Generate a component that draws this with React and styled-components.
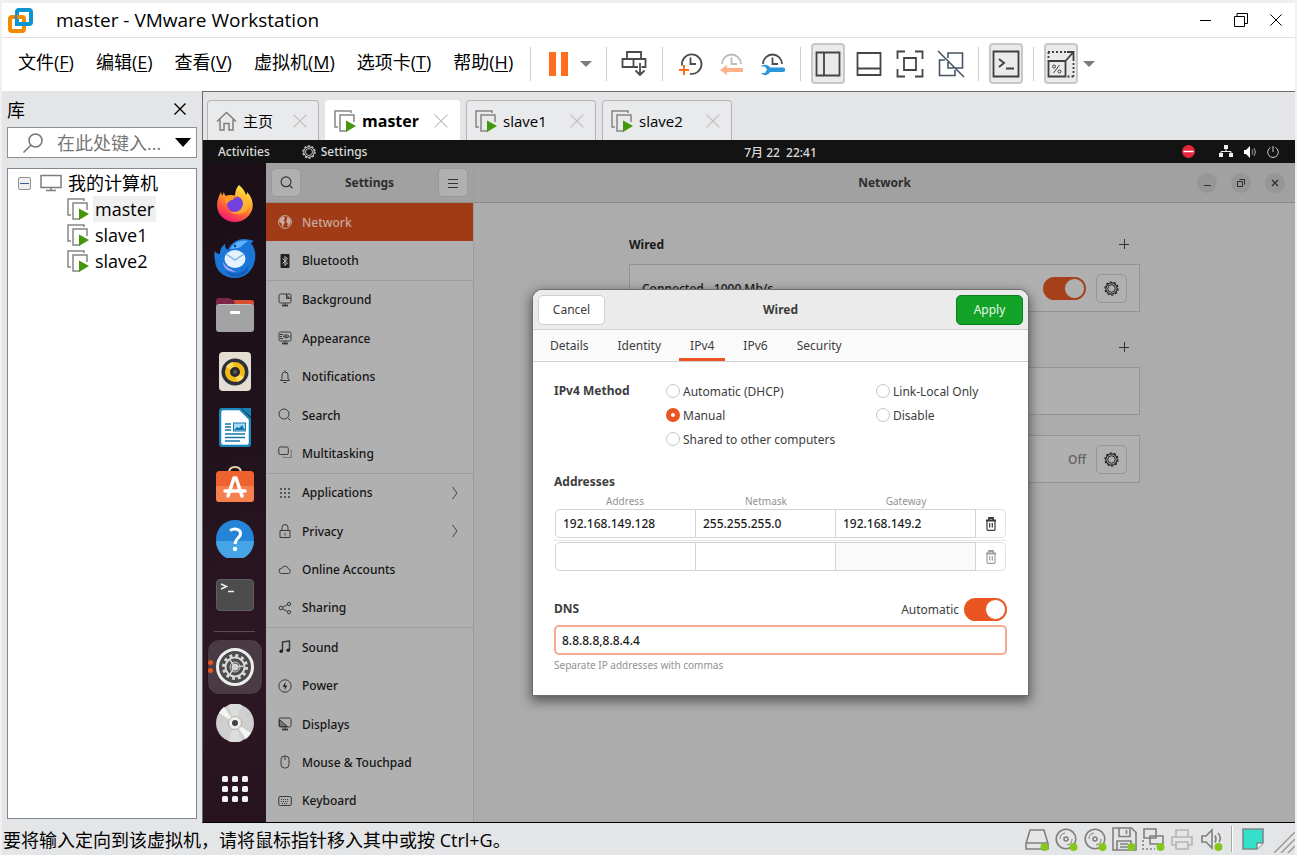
import React from "react";
import styled, { createGlobalStyle, css } from "styled-components";

const host = '"Open Sans", "Noto Sans CJK SC", sans-serif';
const guest = '"Noto Sans", "Noto Sans CJK SC", sans-serif';

const Global = createGlobalStyle`
  *, *::before, *::after { box-sizing: border-box; }
  body { margin: 0; font-family: ${host}; font-size: 18px; color: #000; overflow: hidden; }
  button, input { font: inherit; color: inherit; margin: 0; }
  button { padding: 0; border: 0; background: none; }
  svg { display: block; flex: none; }
  ul { list-style: none; margin: 0; padding: 0; }
  h1, h2, h3, p { margin: 0; font-weight: inherit; font-size: inherit; }
`;

/* ---------- host window ---------- */
const Window = styled.div`
  display: flex;
  flex-direction: column;
  height: 100vh;
  background: #e4e5e7;
  border: solid #f0f0f0;
  border-width: 3px 2px 0;
`;
const TitleBar = styled.header`
  display: flex;
  align-items: center;
  height: 35px;
  padding: 0 2px 0 6px;
  background: #fff;
  border-bottom: 1px solid #e0e0e0;
`;
const AppTitle = styled.h1`
  flex: 1;
  padding-left: 23px;
  font-size: 19px;
  line-height: 32px;
  white-space: nowrap;
`;
const CaptionButton = styled.button`
  display: grid;
  place-items: center;
  width: 35px;
  height: 32px;
`;
const MenuRow = styled.div`
  display: flex;
  align-items: center;
  height: 53px;
  background: #fff;
  padding: 0 0 2px 16px;
`;
const Menu = styled.nav`
  display: flex;
  gap: 22px;
  width: 509px;
  padding-bottom: 4px;
  white-space: nowrap;
`;
const MenuButton = styled.button`
  line-height: 26px;
  u { text-underline-offset: 2px; text-decoration-thickness: 1px; }
`;
const Tools = styled.div`
  display: flex;
  align-items: center;
  gap: 7px;
`;
const Rule = styled.span`
  width: 1px;
  height: 34px;
  margin: 0 ${(p) => (p.$roomy ? 4 : 3)}px;
  background: #cfcfcf;
`;
const ToolButton = styled.button`
  display: grid;
  place-items: center;
  width: 34px;
  height: 41px;
  border-radius: 4px;
  ${(p) => p.$on && css`background: #e9eaec; border: 2px solid #c9c9c9;`}
`;
const Caret = styled.button`
  display: grid;
  place-items: center;
  width: 12px;
  height: 41px;
  margin: 0 4px 0 -2px;
`;
const Main = styled.main`
  flex: 1;
  min-height: 0;
  display: flex;
`;
const Library = styled.aside`
  width: 200px;
  flex: none;
  display: flex;
  flex-direction: column;
  padding: 0 5px 4px;
`;
const LibraryHead = styled.div`
  display: flex;
  justify-content: space-between;
  align-items: center;
  height: 36px;
  padding: 0 11px 0 0;
`;
const SearchBox = styled.label`
  display: flex;
  align-items: center;
  height: 31px;
  margin-bottom: 10px;
  padding: 0 5px 0 15px;
  background: #fff;
  border: 1px solid #8f9091;
  input {
    flex: 1;
    min-width: 0;
    margin: 0 14px;
    padding: 0;
    border: 0;
    outline: 0;
    background: none;
  }
  input::placeholder { color: #767676; opacity: 1; }
`;
const Tree = styled.ul`
  flex: 1;
  background: #fff;
  border: 1px solid #828790;
  padding: 1px 0 0 10px;
`;
const TreeRow = styled.div`
  display: flex;
  align-items: center;
  height: 26px;
  padding-left: ${(p) => (p.$child ? 49 : 0)}px;
`;
const TreeToggle = styled.button`
  display: grid;
  place-items: center;
  width: 13px;
  height: 13px;
  margin-right: 9px;
  border: 1px solid #919191;
  border-radius: 2px;
  background: #eee;
  &::before { content: ""; width: 9px; height: 1px; background: #3c5a9c; }
`;
const TreeLabel = styled.span`
  line-height: 26px;
  margin-left: 4px;
  padding: 0 2px;
  background: ${(p) => (p.$on ? "#f0f0f0" : "none")};
`;
const Work = styled.section`
  flex: 1;
  min-width: 0;
  display: flex;
  flex-direction: column;
  border-left: 1px solid #6a6a6a;
  border-top: 1px solid #6a6a6a;
  border-bottom: 1px solid #000;
`;
const TabStrip = styled.div`
  display: flex;
  align-items: flex-end;
  gap: 6px;
  height: 48px;
  padding-left: 4px;
  font-size: 15px;
`;
const HostTab = styled.div`
  display: flex;
  align-items: center;
  height: 40px;
  padding: 0 11px 0 8px;
  width: ${(p) => p.$w}px;
  background: ${(p) => (p.$on ? "#fff" : "#e9eaec")};
  border: 1px solid ${(p) => (p.$on ? "#fff" : "#b4b4b4")};
  border-bottom: 0;
  border-radius: 4px 4px 0 0;
  font-size: ${(p) => (p.$on ? 16 : 15)}px;
  font-weight: ${(p) => (p.$on ? 700 : 400)};
`;
const TabName = styled.button`
  display: flex;
  align-items: center;
  gap: 6px;
  flex: 1;
  font-weight: inherit;
`;
const StatusBar = styled.footer`
  display: flex;
  align-items: center;
  height: 32px;
  padding-left: 1px;
`;
const StatusText = styled.span`
  flex: 1;
  white-space: nowrap;
`;
const StatusIcons = styled.div`
  display: flex;
  align-items: center;
  gap: 4px;
`;
const StatusItem = styled.button`
  display: grid;
  place-items: center;
  width: 25px;
  height: 28px;
`;
const StatusRule = styled.span`
  width: 2px;
  height: 26px;
  margin: 0 3px;
  background: #a8a8a8;
  border-right: 1px solid #fff;
`;

/* ---------- guest desktop ---------- */
const Guest = styled.div`
  flex: 1;
  min-height: 0;
  display: flex;
  flex-direction: column;
  font-family: ${guest};
  font-size: 12px;
  color: #1a1a1a;
`;
const TopBar = styled.div`
  display: grid;
  grid-template-columns: 63px 1fr auto 1fr;
  align-items: center;
  height: 23px;
  background: #131313;
  color: #dcdcdc;
  font-weight: 500;
`;
const TopLeft = styled.div`
  grid-column: 1 / 3;
  display: flex;
  align-items: center;
  gap: 32px;
  padding-left: 15px;
`;
const TopApp = styled.button`
  display: flex;
  align-items: center;
  gap: 5px;
`;
const TopRight = styled.div`
  display: flex;
  align-items: center;
  justify-content: flex-end;
  gap: 10px;
  padding-right: 16px;
  svg:first-child { margin-right: 14px; }
`;
const Desktop = styled.div`
  flex: 1;
  min-height: 0;
  display: flex;
`;
const Dock = styled.nav`
  width: 63px;
  flex: none;
  display: flex;
  flex-direction: column;
  align-items: center;
  padding: 12px 0 5px;
  background: linear-gradient(170deg, #1b0f17, #21121c 45%, #2e1724 75%, #26131e);
`;
const DockItem = styled.button`
  display: grid;
  place-items: center;
  position: relative;
  width: 56px;
  height: 56px;
  ${(p) => p.$on && css`
    background: #4a3a43;
    border: 1px solid #26131e;
    border-radius: 12px;
  `}
  ${(p) => p.$last && css`margin-top: auto;`}
`;
const Dots = styled.span`
  position: absolute;
  left: 0;
  top: 20px;
  display: grid;
  gap: 3px;
  &::before, &::after {
    content: "";
    width: 5px;
    height: 5px;
    border-radius: 50%;
    background: #e95420;
  }
`;
const DockRule = styled.span`
  width: 41px;
  height: 1px;
  margin: 8px 0 7px;
  background: #5a4b54;
`;
const AppWindow = styled.div`
  flex: 1;
  min-width: 0;
  position: relative;
  display: flex;
  background: #acacac;
`;
const Sidebar = styled.aside`
  width: 208px;
  flex: none;
  display: flex;
  flex-direction: column;
  background: #b0b0b0;
  border-right: 1px solid #9c9c9c;
`;
const SideHead = styled.div`
  display: flex;
  align-items: center;
  justify-content: space-between;
  height: 40px;
  padding: 0 5px;
  background: #a1a1a1;
  border-bottom: 1px solid #8e8e8e;
  font-weight: 700;
  color: #2e2e2e;
`;
const HeadButton = styled.button`
  display: grid;
  place-items: center;
  width: 30px;
  height: 29px;
  border: 1px solid #999;
  border-radius: 5px;
  background: #b0b0b0;
`;
const SideList = styled.ul`
  flex: 1;
  display: flex;
  flex-direction: column;
  padding-bottom: 2px;
`;
const SideItem = styled.li`
  flex: 1;
  display: flex;
  background: ${(p) => (p.$on ? "#a03a17" : "none")};
  color: ${(p) => (p.$on ? "#c9aa9f" : "#151515")};
  ${(p) => p.$end && css`border-bottom: 1px solid #9f9f9f;`}
`;
const SideButton = styled.button`
  flex: 1;
  display: flex;
  align-items: center;
  gap: 10px;
  padding: 0 14px 0 12px;
  font-weight: 500;
  text-align: left;
  span { flex: 1; }
`;
const Panel = styled.section`
  flex: 1;
  min-width: 0;
  display: flex;
  flex-direction: column;
`;
const PanelHead = styled.div`
  display: grid;
  grid-template-columns: 1fr auto 1fr;
  align-items: center;
  height: 40px;
  padding: 0 10px;
  background: #a1a1a1;
  border-bottom: 1px solid #8a8a8a;
  color: #2e2e2e;
  h2 { grid-column: 2; font-weight: 700; }
`;
const WinButtons = styled.div`
  display: flex;
  justify-content: flex-end;
  gap: 14px;
`;
const WinButton = styled.button`
  display: grid;
  place-items: center;
  width: 20px;
  height: 20px;
  border-radius: 50%;
  background: #969696;
`;
const PanelBody = styled.div`
  width: 511px;
  max-width: 100%;
  margin: 0 auto;
  padding-top: 21px;
`;
const GroupHead = styled.div`
  display: flex;
  justify-content: space-between;
  align-items: center;
  height: 40px;
  padding-right: 11px;
  font-weight: 700;
`;
const AddButton = styled.button`
  display: grid;
  place-items: center;
  width: 10px;
  height: 20px;
  margin-left: auto;
`;
const Card = styled.div`
  display: flex;
  align-items: center;
  justify-content: flex-end;
  gap: 10px;
  height: 48px;
  padding: 0 12px;
  margin-bottom: ${(p) => p.$gap}px;
  background: #b0b0b0;
  border: 1px solid #949494;
`;
const CardText = styled.span`
  flex: 1;
  font-weight: 500;
`;
const Muted = styled.span`
  color: #606060;
  font-weight: 500;
`;
const GearButton = styled.button`
  display: grid;
  place-items: center;
  width: 31px;
  height: 29px;
  border: 1px solid #959595;
  border-radius: 5px;
`;
const Switch = styled.input`
  appearance: none;
  flex: none;
  display: flex;
  justify-content: flex-end;
  align-items: center;
  width: 43px;
  height: 23px;
  padding: 1px;
  border-radius: 12px;
  background: ${(p) => (p.$dim ? "#a5401b" : "#e95420")};
  &::before {
    content: "";
    width: 21px;
    height: 21px;
    border-radius: 50%;
    border: 1px solid ${(p) => (p.$dim ? "#a5401b" : "#e95420")};
    background: ${(p) => (p.$dim ? "#b0b0b0" : "#fff")};
  }
`;

/* ---------- connection dialog ---------- */
const Overlay = styled.div`
  position: absolute;
  inset: 0;
  display: grid;
  place-items: center;
`;
const Dialog = styled.form`
  width: 495px;
  height: 405px;
  background: #fff;
  border-radius: 9px 9px 0 0;
  overflow: hidden;
  box-shadow: 0 0 0 1px #6e6e6e, 0 4px 12px 2px rgba(0, 0, 0, 0.5);
  color: #3d3d3d;
`;
const DialogHead = styled.div`
  display: flex;
  align-items: center;
  justify-content: space-between;
  height: 40px;
  padding: 0 5px;
  background: #ebebeb;
  border-bottom: 1px solid #d2d2d2;
  h2 { font-weight: 700; }
`;
const DialogButton = styled.button`
  width: 67px;
  height: 30px;
  border: 1px solid ${(p) => (p.$go ? "#0c7d1f" : "#d0d0d0")};
  border-radius: 5px;
  background: ${(p) => (p.$go ? "#13a329" : "#fff")};
  color: ${(p) => (p.$go ? "#e8f6ea" : "#3d3d3d")};
`;
const Tabs = styled.div`
  display: flex;
  gap: 7px;
  height: 32px;
  padding-left: 6px;
  background: #fafafa;
  border-bottom: 1px solid #d2d2d2;
`;
const Tab = styled.button`
  padding: 3px 11px 0;
  border-bottom: 3px solid ${(p) => (p.$on ? "#e95420" : "transparent")};
`;
const DialogBody = styled.div`
  padding: 17px 21px 0 21px;
`;
const Methods = styled.div`
  display: grid;
  grid-template-columns: 112px 210px 1fr;
  grid-auto-rows: 24px;
  align-items: center;
  margin-bottom: 19px;
`;
const FieldTitle = styled.h3`
  line-height: 24px;
  font-weight: 700;
`;
const Choice = styled.label`
  grid-column: ${(p) => p.$col};
  display: flex;
  align-items: center;
  gap: 3px;
  white-space: nowrap;
`;
const Radio = styled.input.attrs({ type: "radio" })`
  appearance: none;
  width: 14px;
  height: 14px;
  border: 1px solid #c6c6c6;
  border-radius: 50%;
  background: #fff;
  &:checked { border: 5px solid #e95420; }
`;
const AddressTable = styled.table`
  width: 100%;
  border-collapse: separate;
  border-spacing: 0;
  table-layout: fixed;
  margin-bottom: 26px;
  th {
    height: 15px;
    padding: 0;
    font-size: 10px;
    line-height: 15px;
    font-weight: 400;
    color: #929292;
  }
  td { padding: 0; height: 29px; }
  td:first-child { padding-left: 1px; }
  td:last-child { padding-right: 1px; }
  tr:first-child td { padding-bottom: 2px; border-bottom: 1px solid #e6e6e6; }
  tr:last-child td { padding-top: 1px; }
  th:first-child { width: 142px; }
  th:last-child { width: 31px; }
`;
const Cell = styled.input`
  display: block;
  width: 100%;
  height: 29px;
  padding: 0 7px;
  border: 1px solid #d4d4d4;
  border-left-width: ${(p) => (p.$first ? 1 : 0)}px;
  border-radius: ${(p) => (p.$first ? "5px 0 0 5px" : "0")};
  background: ${(p) => (p.$off ? "#fafafa" : "#fff")};
  font-weight: 500;
  color: #1d1d1d;
`;
const Trash = styled.button`
  display: grid;
  place-items: center;
  width: 100%;
  height: 29px;
  border: 1px solid #e2e2e2;
  border-left: 0;
  border-radius: 0 5px 5px 0;
  color: ${(p) => (p.disabled ? "#a0a0a0" : "#3a3a3a")};
`;
const DnsHead = styled.div`
  display: flex;
  align-items: center;
  justify-content: space-between;
  height: 24px;
  margin-bottom: 4px;
  label { display: flex; align-items: center; gap: 5px; }
`;
const DnsInput = styled.input`
  display: block;
  width: 100%;
  height: 30px;
  padding: 0 6px;
  border: 2px solid #f4ab91;
  border-radius: 5px;
  outline: 0;
  font-weight: 500;
  color: #1d1d1d;
`;
const Hint = styled.p`
  margin-top: 2px;
  font-size: 10px;
  line-height: 16px;
  color: #929292;
`;

/* ---------- drawings ---------- */
const Svg = ({ w, h = w, vb, sw = 1, c = "currentColor", children }) => (
  <svg width={w} height={h} viewBox={vb || `0 0 ${w} ${h}`} fill="none" stroke={c} strokeWidth={sw} aria-hidden="true">
    {children}
  </svg>
);

const Logo = () => (
  <Svg w={25} sw={4}>
    <rect x="9" y="2" width="14" height="14" rx="2" stroke="#0a94d2" />
    <rect x="2" y="9" width="14" height="14" rx="2" stroke="#f38b00" />
    <path d="M9 7v9h9" stroke="#0a94d2" />
    <path d="M9 9h5.500" stroke="#f38b00" />
  </Svg>
);
const VmIcon = () => (
  <Svg w={22} c="#858585" sw={1.5}>
    <path d="M4 17H1V1h16v2" />
    <path d="M13 21H6V5h14v7" />
    <path d="M12 10.500l10 5.500-10 6z" fill="#45960c" stroke="none" />
  </Svg>
);
const Cross = ({ s = 11, c = "#000", sw = 1 }) => (
  <Svg w={s} vb="0 0 12 12" c={c} sw={sw}><path d="M.5.5l11 11M11.500.5l-11 11" /></Svg>
);
const HomeIcon = () => (
  <Svg w={21} h={20} c="#7d7d7d" sw={1.5}>
    <path d="M1 10.500L10.500 1.500 20 10.500M4 8.500v10.500h4v-6.500h5V19h4V8.500" />
  </Svg>
);
const CaretIcon = () => (
  <Svg w={12} h={6}><path d="M0 0h12L6 6z" fill="#7c7c7c" stroke="none" /></Svg>
);

const ClockFace = ({ c = "#4d4d4d", full }) => (
  <g stroke={c} strokeWidth="1.800">
    {full ? <path d="M4 14.500a9.800 9.800 0 1 1 8 8.300" /> : <path d="M3 13a9.500 9.500 0 1 1 19 0" />}
    <path d="M12.500 6.500v6.500h5.500" />
  </g>
);
const toolIcons = {
  pause: <Svg w={19} h={24}><path d="M0 0h7v24H0zM12 0h7v24h-7z" fill="#ff6c1c" stroke="none" /></Svg>,
  send: (
    <Svg w={26} c="#4a4a4a" sw={1.8}>
      <path d="M6 1h14v7H6zM12.500 8v8M17 16H1.500V8h23v8h-4M19 12v12M14.500 19.500L19 24l4.500-4.500" />
    </Svg>
  ),
  snap: <Svg w={26}><ClockFace full /><path d="M1 19h10M6 14v10" stroke="#ff6c1c" strokeWidth="2" /></Svg>,
  revert: (
    <Svg w={26}><ClockFace c="#bdbdbd" /><path d="M1 19l7-5v3h16v4H8v3z" fill="#ffb28a" stroke="none" /></Svg>
  ),
  manage: (
    <Svg w={26}>
      <ClockFace />
      <path d="M1 15.500h4l2 3-2 3.500H1.500C3 25 8 25 10 21h13a2 2 0 0 0 0-4.500H10C8 13 3 13 1 15.500z" fill="#2a97d8" stroke="none" />
    </Svg>
  ),
  library: <Svg w={26} c="#454545" sw={1.8}><path d="M1.500 1.500h23v23h-23zM9 1.500v23" /></Svg>,
  thumbs: <Svg w={26} c="#454545" sw={1.8}><path d="M1.500 2h23v22h-23zM1.500 17.500h23" /></Svg>,
  full: (
    <Svg w={28} c="#454545" sw={1.8}>
      <path d="M1.500 9V1.500H9M19 1.500h7.500V9M26.500 19v7.500H19M9 26.500H1.500V19M8 8h12v12H8z" />
    </Svg>
  ),
  unity: (
    <Svg w={28} c="#465564" sw={1.6}>
      <path d="M8 10H2.500v15.500H18V20M11 8V3h14.500v15H18M11 12v6h6M1 1l26 26" />
    </Svg>
  ),
  console: <Svg w={28} c="#3f3f3f" sw={1.8}><path d="M1.500 1.500h25v25h-25zM7 9l5 4-5 4M14 18.500h8" /></Svg>,
  stretch: (
    <Svg w={28} c="#3f3f3f" sw={1.8}>
      <path d="M1.500 11h17v15.500h-17zM18.500 11L26 2.500M20 2h6.500v7" />
      <path d="M1 2h19M1.500 2v9M26.500 9v17.500M26.500 26.500h-8" strokeDasharray="2 2" />
      <path d="M6.500 23l6-8" strokeWidth="1" />
      <circle cx="7" cy="16.500" r="1.500" strokeWidth="1" /><circle cx="12.500" cy="21.500" r="1.500" strokeWidth="1" />
    </Svg>
  ),
};

const Live = () => <circle cx="19.500" cy="21" r="4" fill="#85c81c" stroke="none" />;
const Disc = () => (
  <>
    <circle cx="12" cy="13" r="9.800" /><circle cx="12" cy="13" r="2" />
    <path d="M6 13a6 6 0 0 1 5-6M18 13a6 6 0 0 1-5 6" strokeWidth="1" />
  </>
);
const statusIcons = {
  "Hard disk": <><path d="M1 17.500L5 4h14l4 13.500v5.500H1zM1 17h22" /><Live /></>,
  "CD 1": <><Disc /><Live /></>,
  "CD 2": <><Disc /><Live /></>,
  Floppy: <><path d="M1 2h18.500L24 6.500V24H1zM7 2v8.500h11V2M5 24v-9h14v9M8 18h8M8 21h8M14.500 4v4" /><Live /></>,
  Network: (
    <>
      <path d="M3 3h12v9H3zM9 10h13v8H9z" fill="#e4e5e7" /><path d="M2 14v9h12" strokeDasharray="2 2" /><Live />
    </>
  ),
  Printer: (
    <g stroke="#b5b5b5"><path d="M6 11V4h12v7M6 19H2v-8h20v8h-4M6 16h12v7H6z" /></g>
  ),
  Sound: <><path d="M3 10h4l6-6v18l-6-6H3zM16 9.500q2 3.500 0 7M19 7q4 5 1 9" /><Live /></>,
};

const Gear = ({ s = 15, c = "currentColor" }) => (
  <Svg w={s} vb="0 0 16 16" c={c}>
    <circle cx="8" cy="8" r="7" strokeWidth="1.200" strokeDasharray="2.400 2" />
    <circle cx="8" cy="8" r="6" strokeWidth="1.100" /><circle cx="8" cy="8" r="4" strokeWidth="1" />
  </Svg>
);
const Lens = ({ s = 14, sw = 1.2, c }) => (
  <Svg w={s} vb="0 0 14 14" sw={sw} c={c}><circle cx="6.500" cy="6.200" r="5.300" /><path d="M10.200 10l3.200 3.200" /></Svg>
);

const screen = <path d="M2.500 1h9q1.500 0 1.500 1.500v6q0 1.500-1.500 1.500h-9Q1 10 1 8.500v-6Q1 1 2.500 1zM7 10v2.500" />;
const foot = <path d="M4 12.500h6" strokeWidth="1.800" />;
const sideIcons = {
  Network: (
    <>
      <circle cx="7" cy="7" r="6.400" />
      <path d="M2 3.500L5.500 1 7 3.500 5.500 5l1.500 2.500-1.500 2L5.200 13 4 11 3.500 8.500 1 6.500zM9 2l3 1.500 1 3.500-2 3.500-1.500 1V8L7.800 6.500 9 5z" fill="currentColor" stroke="none" />
    </>
  ),
  Bluetooth: (
    <>
      <rect x="2.500" y="0" width="9" height="14" rx="1" fill="#222" stroke="none" />
      <path d="M4.500 4.500l5 4.500L7 11.500v-9L9.500 5l-5 4.500" stroke="#c4c4c4" />
    </>
  ),
  Background: <>{screen}<path d="M8.500 1v4.500H13" /><path d="M9 5V1.500L12.500 5z" fill="#666" stroke="none" />{foot}</>,
  Appearance: (
    <>{screen}<path d="M2 3.500h3M2 5.500h2M2 7.500h3M5 5.500q3-3.500 6.500 0-3 3-6.500 0" /><circle cx="8" cy="5.500" r=".8" />{foot}</>
  ),
  Notifications: <path d="M2.500 10.500h9l-1.500-2V5a3 3 0 0 0-6 0v3.500zM5.500 12.500h3M7 .5v1.500" />,
  Search: <><circle cx="6" cy="6" r="5" /><path d="M9.700 9.700l3 3" /></>,
  Multitasking: <><rect x=".8" y="1" width="9.500" height="7.500" rx="1.500" /><path d="M12 4.500h1.300v7H5v-1" stroke="#777" /></>,
  Applications: (
    <path d="M2 3h2M6 3h2M10 3h2M2 7h2M6 7h2M10 7h2M2 11h2M6 11h2M10 11h2" strokeWidth="1.600" />
  ),
  Privacy: <path d="M2 6.500h10v7H2zM4 6.500V3.500a3 3 0 0 1 6 0v3M7 9v2.500" />,
  "Online Accounts": <path d="M3.500 10.500a2.600 2.600 0 0 1 .2-5.200 3.600 3.600 0 0 1 6.800.6 2.400 2.400 0 0 1 .2 4.600z" />,
  Sharing: (
    <><circle cx="3" cy="7" r="1.800" /><circle cx="11" cy="3" r="1.600" /><circle cx="11" cy="11.200" r="1.600" /><path d="M4.700 6.200L9.500 3.700M4.700 7.900l4.800 2.500" /></>
  ),
  Sound: (
    <><path d="M4.500 11V2l7-1v9" strokeWidth="1.500" /><circle cx="3.200" cy="11.300" r="1.800" fill="#222" stroke="none" /><circle cx="10.200" cy="10.300" r="1.800" fill="#222" stroke="none" /></>
  ),
  Power: <><circle cx="7" cy="7" r="6.200" /><path d="M7.500 2.800L4.700 7.700h2.100L6.500 11.200l2.900-4.800H7.200z" fill="#222" stroke="none" /></>,
  Displays: <>{screen}<path d="M1.500 2.500L9.500 9.500h-8z" fill="#777" />{foot}</>,
  "Mouse & Touchpad": <><rect x="3" y="1" width="8" height="12" rx="3.500" /><path d="M7 1v4" /></>,
  Keyboard: <><rect x=".8" y="2.500" width="12.500" height="9" rx="1.500" /><path d="M3 5.500h8M3 7.500h8M4 9.500h6" strokeDasharray="1 1" /></>,
};

const TrashIcon = () => (
  <Svg w={12} h={14} sw={1.2}>
    <path d="M1 3.500h10M4 3V1h4v2" strokeWidth="1.800" />
    <path d="M2 4v8.500q0 .8.800.8h6.400q.8 0 .8-.8V4M4.700 6v4.500M7.300 6v4.500" />
  </Svg>
);

const Firefox = () => (
  <svg width="38" height="40" viewBox="0 0 38 40" aria-hidden="true">
    <defs>
      <linearGradient id="ff" x1=".8" y1="0" x2=".3" y2="1">
        <stop offset="0" stopColor="#fff04a" /><stop offset=".4" stopColor="#ffab2e" /><stop offset=".7" stopColor="#ff5a3a" /><stop offset="1" stopColor="#f0147a" />
      </linearGradient>
    </defs>
    <path d="M23 2c4 3 6 7 7 10 1-1 1-2 1-3 5 5 7 12 5 18C33 35 26 39 19 39 9 39 1 32 1 22c0-5 2-9 4-13l1 4 2-4c0 2 1 3 2 4 4-1 7 0 9 1 0-5 1-9 4-12z" fill="url(#ff)" />
    <circle cx="19" cy="21" r="8" fill="#7540e0" />
    <path d="M10 13c5-2 10-1 12 1-3 0-5 1-5 3-3 0-5 2-6 4-2-2-3-5-1-8z" fill="#ff9a1f" />
    <path d="M27 17c1 7-3 12-9 12-4 0-7-2-8-5 3 8 18 11 22 1 1-4 0-8-2-11z" fill="#ffb931" opacity=".7" />
  </svg>
);
const Thunderbird = () => (
  <svg width="42" height="40" viewBox="0 0 42 40" aria-hidden="true">
    <path d="M1 12c1 2 3 3 5 3 0-5 2-8 5-10 0 3 1 5 3 6C17 4 23 0 30 0c4 0 7 1 10 2l-3 2c4 5 5 11 4 17C39 32 31 39 21 39 9 39 1 31 1 21c-1-3-1-6 0-9z" fill="#1b76d8" />
    <path d="M16 10c4-7 11-10 19-8-5 1-6 6-11 7z" fill="#5db1fa" />
    <path d="M11 31c7 6 20 4 24-6 0 8-6 13-13 13-5 0-9-3-11-7z" fill="#0f55ae" opacity=".7" />
    <path d="M9 23c0 6 5 10 13 10-3-2-10-4-13-10z" fill="#a9a2fa" />
    <ellipse cx="21" cy="20" rx="10.500" ry="9" fill="#e6f2ff" />
    <path d="M12 15l9 6 9-6" fill="none" stroke="#7fb4ea" strokeWidth="1.500" />
    <circle cx="21" cy="7" r="1.200" fill="#083a7a" />
  </svg>
);
const Files = () => (
  <svg width="38" height="36" viewBox="0 0 38 36" aria-hidden="true">
    <path d="M0 4q0-3 3-3h10l4 2h18q3 0 3 3v10H0z" fill="#7b2846" /><path d="M18 3h17q3 0 3 3v8H20z" fill="#d8512e" />
    <rect y="7" width="38" height="28" rx="3" fill="#a3a3a3" /><path d="M3 7.500h32" stroke="#c4c4c4" /><rect x="14" y="14" width="10" height="3" rx="1" fill="#fff" />
  </svg>
);
const Rhythmbox = () => (
  <svg width="32" height="39" viewBox="0 0 32 39" aria-hidden="true">
    <rect width="32" height="39" rx="4" fill="#e3ddd2" /><circle cx="16" cy="20" r="13.500" fill="#2c2f3a" /><circle cx="16" cy="20" r="10" fill="#f2ba14" />
    <path d="M16 20L7 15a10 10 0 0 1 7-5zM16 20l9 5a10 10 0 0 1-7 5z" fill="#ffd95a" /><circle cx="16" cy="20" r="5" fill="#2a2a2e" /><circle cx="16" cy="20" r="2" fill="#55555c" />
  </svg>
);
const Writer = () => (
  <svg width="32" height="39" viewBox="0 0 32 39" aria-hidden="true">
    <path d="M4 1h17l10 10v24q0 3-3 3H4q-3 0-3-3V4q0-3 3-3z" fill="#fff" stroke="#1985b8" strokeWidth="2.500" /><path d="M22 0h10v9z" fill="#1b7fb4" />
    <path d="M6 16h6M6 19h6M6 22h6M6 26h20M6 29.500h20M6 33h15" stroke="#1677ae" strokeWidth="1.500" />
    <rect x="14.500" y="15" width="12" height="8" fill="#a8dcf4" stroke="#1677ae" /><path d="M15 22l3-3 2 1 3-3 3 5z" fill="#1677ae" />
  </svg>
);
const Software = () => (
  <svg width="38" height="37" viewBox="0 0 38 37" aria-hidden="true">
    <path d="M13 8q0-6 6-6t6 6" fill="none" stroke="#e6cfa6" strokeWidth="2" /><rect y="6" width="38" height="31" rx="3.500" fill="#ee6230" /><path d="M0 21h38v12.500q0 3.500-3.500 3.500h-31Q0 37 0 33.500z" fill="#f57f4d" />
    <path d="M12 31l6-18h2l6 18M9 26h20" fill="none" stroke="#fff" strokeWidth="3.500" strokeLinecap="round" strokeLinejoin="round" />
  </svg>
);
const Help = () => (
  <svg width="38" height="38" viewBox="0 0 38 38" aria-hidden="true">
    <circle cx="19" cy="19" r="19" fill="#2384d8" /><path d="M0 21h38a19 19 0 0 1-38 0z" fill="#46a3e6" />
    <path d="M14 10.500c5-3 11-1 10.500 3.500-.4 4-5.500 4.500-5.500 10" fill="none" stroke="#fff" strokeWidth="3" /><circle cx="19" cy="29" r="2.200" fill="#fff" />
  </svg>
);
const Terminal = () => (
  <svg width="38" height="32" viewBox="0 0 38 32" aria-hidden="true">
    <rect x=".5" y=".5" width="37" height="31" rx="3.500" fill="#4c4c4c" stroke="#5e5e5e" /><path d="M5 5l5.500 2.500L5 10M12 12.500h6" fill="none" stroke="#eee" strokeWidth="1.500" />
  </svg>
);
const SettingsApp = () => (
  <svg width="38" height="38" viewBox="0 0 38 38" fill="none" aria-hidden="true">
    <circle cx="19" cy="19" r="17.500" fill="#4b4b4b" stroke="#ededed" strokeWidth="3" />
    <circle cx="19" cy="19" r="11.500" stroke="#d9d9d9" strokeWidth="3" strokeDasharray="3 3.020" />
    <circle cx="19" cy="19" r="9.500" stroke="#d9d9d9" strokeWidth="2" /><circle cx="19" cy="19" r="5" stroke="#d0d0d0" strokeWidth="1" /><circle cx="19" cy="19" r="3.500" fill="#d9d9d9" />
    <path d="M19 19l8-1M19 19l-5 7M19 19l-5-7" stroke="#d0d0d0" strokeWidth="1.500" />
  </svg>
);
const DiscApp = () => (
  <svg width="38" height="38" viewBox="0 0 38 38" aria-hidden="true">
    <circle cx="19" cy="19" r="19" fill="#cfcfcf" /><path d="M19 19L3 9a19 19 0 0 1 5-6zM19 19l16 10a19 19 0 0 1-5 6z" fill="#f4f4f4" /><path d="M19 19L12 1a19 19 0 0 1 14 0zM19 19l-7 18a19 19 0 0 0 14 0z" fill="#dcdcdc" />
    <circle cx="19" cy="19" r="6.500" fill="#efefef" stroke="#b8b09c" /><circle cx="19" cy="19" r="3" fill="#3f4248" />
  </svg>
);
const Grid9 = () => (
  <svg width="26" height="26" viewBox="0 0 26 26" fill="#f2f2f2" aria-hidden="true">
    {[0, 10, 20].flatMap((x) => [0, 10, 20].map((y) => <rect key={`${x}-${y}`} x={x} y={y} width="6" height="6" rx="1.500" />))}
  </svg>
);

/* ---------- content ---------- */
const menus = [["文件", "F"], ["编辑", "E"], ["查看", "V"], ["虚拟机", "M"], ["选项卡", "T"], ["帮助", "H"]];
const dockApps = [
  ["Firefox", Firefox], ["Thunderbird", Thunderbird], ["Files", Files], ["Rhythmbox", Rhythmbox],
  ["Writer", Writer], ["Software", Software], ["Help", Help], ["Terminal", Terminal],
];
const groupEnds = ["Bluetooth", "Multitasking", "Sharing"];
const withArrow = ["Applications", "Privacy"];
const Tool = ({ name, on }) => <ToolButton aria-label={name} $on={on}>{toolIcons[name]}</ToolButton>;

function GuestSidebar() {
  return (
    <Sidebar>
      <SideHead>
        <HeadButton aria-label="Search"><Lens s={13} c="#333" /></HeadButton>
        <h2>Settings</h2>
        <HeadButton aria-label="Menu"><Svg w={10} h={10} c="#333"><path d="M0 1.500h10M0 5.500h10M0 9.500h10" /></Svg></HeadButton>
      </SideHead>
      <SideList>
        {Object.keys(sideIcons).map((name) => (
          <SideItem key={name} $on={name === "Network"} $end={groupEnds.includes(name)}>
            <SideButton>
              <Svg w={14} c={name === "Network" ? "currentColor" : "#3a3a3a"}>{sideIcons[name]}</Svg>
              <span>{name}</span>
              {withArrow.includes(name) && <Svg w={8} h={14} c="#444"><path d="M1.500 1L6 7l-4.500 6" /></Svg>}
            </SideButton>
          </SideItem>
        ))}
      </SideList>
    </Sidebar>
  );
}

const Plus = () => <Svg w={10} h={10} c="#333"><path d="M0 5.500h10M5.500 0v10" /></Svg>;

function NetworkPanel() {
  return (
    <Panel>
      <PanelHead>
        <h2>Network</h2>
        <WinButtons>
          <WinButton aria-label="Minimize"><Svg w={8} h={8}><path d="M1 6.500h7" /></Svg></WinButton>
          <WinButton aria-label="Restore"><Svg w={8} h={8}><path d="M.5 2.500h5v5h-5zM2.500.5h5v5" /></Svg></WinButton>
          <WinButton aria-label="Close"><Svg w={8} h={8} sw={1.4}><path d="M1 1l6 6M7 1L1 7" /></Svg></WinButton>
        </WinButtons>
      </PanelHead>
      <PanelBody>
        <GroupHead><span>Wired</span><AddButton aria-label="Add wired connection"><Plus /></AddButton></GroupHead>
        <Card $gap={15}>
          <CardText>Connected - 1000 Mb/s</CardText>
          <Switch type="checkbox" defaultChecked $dim aria-label="Wired" />
          <GearButton aria-label="Wired options"><Gear /></GearButton>
        </Card>
        <GroupHead><AddButton aria-label="Add"><Plus /></AddButton></GroupHead>
        <Card $gap={20} />
        <Card $gap={0}>
          <Muted>Off</Muted>
          <GearButton aria-label="Options"><Gear /></GearButton>
        </Card>
      </PanelBody>
    </Panel>
  );
}

function ConnectionDialog() {
  return (
    <Overlay>
      <Dialog role="dialog" aria-label="Wired" onSubmit={(e) => e.preventDefault()}>
        <DialogHead>
          <DialogButton type="button">Cancel</DialogButton>
          <h2>Wired</h2>
          <DialogButton $go>Apply</DialogButton>
        </DialogHead>
        <Tabs role="tablist">
          {["Details", "Identity", "IPv4", "IPv6", "Security"].map((t) => (
            <Tab key={t} type="button" role="tab" aria-selected={t === "IPv4"} $on={t === "IPv4"}>{t}</Tab>
          ))}
        </Tabs>
        <DialogBody>
          <Methods>
            <FieldTitle>IPv4 Method</FieldTitle>
            <Choice $col={2}><Radio name="method" />Automatic (DHCP)</Choice>
            <Choice $col={3}><Radio name="method" />Link-Local Only</Choice>
            <Choice $col={2}><Radio name="method" defaultChecked />Manual</Choice>
            <Choice $col={3}><Radio name="method" />Disable</Choice>
            <Choice $col={2}><Radio name="method" />Shared to other computers</Choice>
          </Methods>
          <FieldTitle>Addresses</FieldTitle>
          <AddressTable>
            <thead>
              <tr><th>Address</th><th>Netmask</th><th>Gateway</th><th /></tr>
            </thead>
            <tbody>
              {[["192.168.149.128", "255.255.255.0", "192.168.149.2"], ["", "", ""]].map((row, r) => (
                <tr key={r}>
                  {row.map((v, i) => (
                    <td key={i}>
                      <Cell defaultValue={v} $first={i === 0} $off={r === 1 && i === 2} aria-label={["Address", "Netmask", "Gateway"][i]} />
                    </td>
                  ))}
                  <td><Trash type="button" disabled={r === 1} aria-label="Delete"><TrashIcon /></Trash></td>
                </tr>
              ))}
            </tbody>
          </AddressTable>
          <DnsHead>
            <FieldTitle>DNS</FieldTitle>
            <label>Automatic<Switch type="checkbox" defaultChecked /></label>
          </DnsHead>
          <DnsInput defaultValue="8.8.8.8,8.8.4.4" aria-label="DNS" />
          <Hint>Separate IP addresses with commas</Hint>
        </DialogBody>
      </Dialog>
    </Overlay>
  );
}

function GuestDesktop() {
  return (
    <Guest>
      <TopBar>
        <TopLeft>
          <TopApp>Activities</TopApp>
          <TopApp><Gear s={14} />Settings</TopApp>
        </TopLeft>
        <span>7月 22&nbsp; 22:41</span>
        <TopRight>
          <Svg w={13}><circle cx="6.500" cy="6.500" r="6.500" fill="#e5263c" stroke="none" /><path d="M1.500 6.500h10" stroke="#fff" strokeWidth="1.500" /></Svg>
          <Svg w={14} h={13} c="#eee"><path d="M5 0h4v4H5zM0 8h4v4H0zM10 8h4v4h-4z" fill="#eee" stroke="none" /><path d="M7 4v2.500M2 8.500v-2h10v2" /></Svg>
          <Svg w={14} h={12} c="#aaa"><path d="M1 4h2l4-4v12L3 8H1z" fill="#fff" stroke="none" /><path d="M9 3.500q2 2.500 0 5M11 2q3 4 0 8" /></Svg>
          <Svg w={12} h={12} c="#ccc"><path d="M3.500 1.500a5.300 5.300 0 1 0 5 0M6 0v6" /></Svg>
        </TopRight>
      </TopBar>
      <Desktop>
        <Dock>
          {dockApps.map(([name, Icon]) => <DockItem key={name} aria-label={name}><Icon /></DockItem>)}
          <DockRule />
          <DockItem aria-label="Settings" $on><Dots /><SettingsApp /></DockItem>
          <DockItem aria-label="Disc"><DiscApp /></DockItem>
          <DockItem aria-label="Show applications" $last><Grid9 /></DockItem>
        </Dock>
        <AppWindow>
          <GuestSidebar />
          <NetworkPanel />
          <ConnectionDialog />
        </AppWindow>
      </Desktop>
    </Guest>
  );
}

export default function App() {
  return (
    <Window>
      <Global />
      <TitleBar>
        <Logo />
        <AppTitle>master - VMware Workstation</AppTitle>
        <CaptionButton aria-label="Minimize"><Svg w={11} h={11} c="#000"><path d="M0 5.500h11" /></Svg></CaptionButton>
        <CaptionButton aria-label="Restore"><Svg w={14} h={14} c="#000"><path d="M.5 3.500h10v10h-10zM3 3V.5h10.500v10H11" /></Svg></CaptionButton>
        <CaptionButton aria-label="Close"><Cross s={12} /></CaptionButton>
      </TitleBar>
      <MenuRow>
        <Menu>
          {menus.map(([label, key]) => <MenuButton key={key}>{label}(<u>{key}</u>)</MenuButton>)}
        </Menu>
        <Tools>
          <Rule /><Tool name="pause" /><Caret aria-label="Power menu"><CaretIcon /></Caret>
          <Rule /><Tool name="send" />
          <Rule $roomy /><Tool name="snap" /><Tool name="revert" /><Tool name="manage" />
          <Rule /><Tool name="library" on /><Tool name="thumbs" /><Tool name="full" /><Tool name="unity" />
          <Rule /><Tool name="console" on />
          <Rule /><Tool name="stretch" on /><Caret aria-label="Stretch menu"><CaretIcon /></Caret>
        </Tools>
      </MenuRow>
      <Main>
        <Library>
          <LibraryHead>
            <h2>库</h2>
            <button aria-label="Close library"><Cross s={12} sw={1.4} /></button>
          </LibraryHead>
          <SearchBox>
            <Svg w={20} c="#767676" sw={1.5}><circle cx="12.500" cy="7.500" r="6.500" /><path d="M8 12l-7.500 7.500" /></Svg>
            <input placeholder="在此处键入..." aria-label="Search library" />
            <Svg w={16} h={9}><path d="M0 0h16L8 9z" fill="#000" stroke="none" /></Svg>
          </SearchBox>
          <Tree>
            <li>
              <TreeRow>
                <TreeToggle aria-label="Collapse" />
                <Svg w={22} h={18} c="#7d7d7d" sw={1.5}><path d="M1 1.500h20v12H1zM11 13.500v3M6 16.500h10" /></Svg>
                <TreeLabel>我的计算机</TreeLabel>
              </TreeRow>
              <ul>
                {["master", "slave1", "slave2"].map((n) => (
                  <li key={n}><TreeRow $child><VmIcon /><TreeLabel $on={n === "master"}>{n}</TreeLabel></TreeRow></li>
                ))}
              </ul>
            </li>
          </Tree>
        </Library>
        <Work>
          <TabStrip>
            <HostTab $w={112}><TabName><HomeIcon />主页</TabName><button aria-label="Close"><Cross s={14} c="#bdbdbd" /></button></HostTab>
            <HostTab $w={135} $on><TabName><VmIcon />master</TabName><button aria-label="Close"><Cross s={14} c="#bdbdbd" /></button></HostTab>
            <HostTab $w={130}><TabName><VmIcon />slave1</TabName><button aria-label="Close"><Cross s={14} c="#bdbdbd" /></button></HostTab>
            <HostTab $w={130}><TabName><VmIcon />slave2</TabName><button aria-label="Close"><Cross s={14} c="#bdbdbd" /></button></HostTab>
          </TabStrip>
          <GuestDesktop />
        </Work>
      </Main>
      <StatusBar>
        <StatusText>要将输入定向到该虚拟机，请将鼠标指针移入其中或按 Ctrl+G。</StatusText>
        <StatusIcons>
          {Object.entries(statusIcons).map(([name, icon]) => (
            <StatusItem key={name} aria-label={name}><Svg w={25} h={26} c="#7f7f7f" sw={1.6}>{icon}</Svg></StatusItem>
          ))}
          <StatusRule />
          <StatusItem aria-label="Messages">
            <Svg w={22} c="#7a8a8a" sw={1.6}><path d="M1 1h20v14l-6 6H1z" fill="#35e0cb" /><path d="M21 15h-6v6" fill="#fff" /></Svg>
          </StatusItem>
          <Svg w={26} h={28} c="#9a9a9a" sw={1.5}><path d="M5 28L26 7M12 28l14-14M19 28l7-7" /></Svg>
        </StatusIcons>
      </StatusBar>
    </Window>
  );
}
